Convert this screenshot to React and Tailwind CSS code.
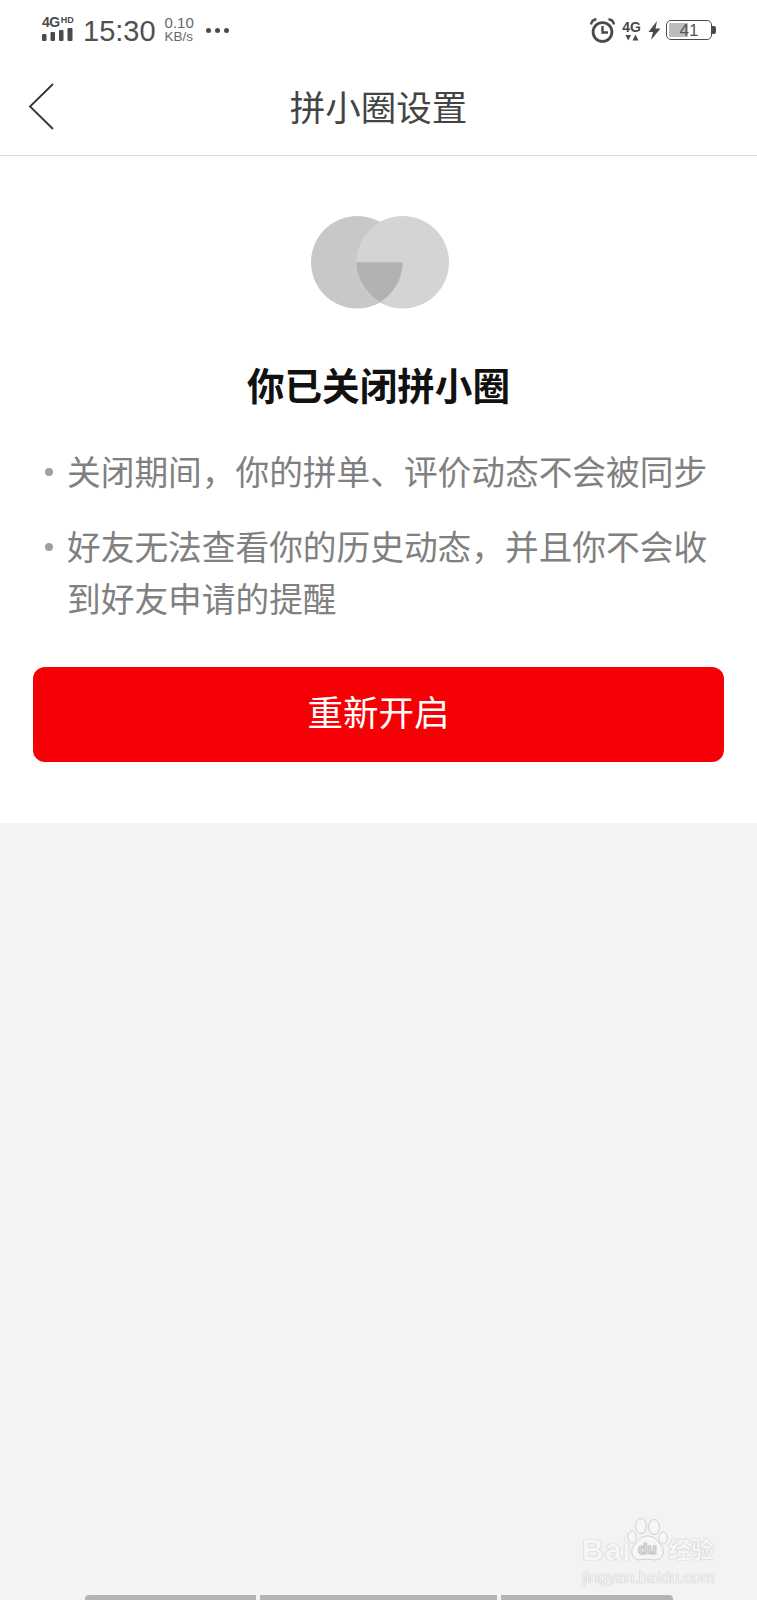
import React from 'react';

const cjk = 'font-["Noto_Sans_CJK_SC",sans-serif]';
const latin = 'font-["Liberation_Sans",Arial,sans-serif]';

const SignalIcon = () => (
    <div className="flex flex-col w-[31px] h-[24px] mt-[-3px] text-[#4a4a4a]">
        <div className={`${latin} font-bold flex items-start h-[10px]`}>
            <span className="text-[14px] leading-[11px] tracking-[-0.5px]">4G</span>
            <span className="text-[9px] leading-[7px] ml-[1px]">HD</span>
        </div>
        <svg width="31" height="14" viewBox="0 0 31 14" fill="#4a4a4a">
            <rect x="0" y="7" width="4.5" height="7" rx="1" />
            <rect x="8.5" y="5" width="4.5" height="9" rx="1" />
            <rect x="17" y="3" width="4.5" height="11" rx="1" />
            <rect x="25.5" y="1" width="5" height="13" rx="1" />
        </svg>
    </div>
);

const AlarmIcon = () => (
    <svg width="25" height="25" viewBox="0 0 25 25" fill="none" stroke="#4a4a4a">
        <circle cx="12.5" cy="14" r="9.4" strokeWidth="2.8" />
        <path d="M12.5 8v6.5h5.5" strokeWidth="2.4" />
        <path d="M1 6.5C1.5 3.5 3.5 1.5 6.5 1.2M24 6.5C23.5 3.5 21.5 1.5 18.5 1.2" strokeWidth="2.4" />
    </svg>
);

const BoltIcon = () => (
    <svg width="13" height="19" viewBox="0 0 13 19" fill="#4a4a4a">
        <path d="M9 0L0.5 11h4.5L3 19 12.5 7.5H7.5L9 0z" />
    </svg>
);

const StatusBar = () => (
    <div className="h-[60px] shrink-0 flex items-center justify-between pl-[42px] pr-[41px] text-[#4a4a4a]">
        <div className="flex items-center">
            <SignalIcon />
            <span className={`${latin} text-[29px] leading-none ml-[10px] mt-[2px] text-[#505050]`}>15:30</span>
            <div className={`${latin} ml-[9px] flex flex-col items-start text-[#666]`}>
                <span className="text-[15px] leading-[14px]">0.10</span>
                <span className="text-[13.5px] leading-[14px]">KB/s</span>
            </div>
            <div className="flex gap-[4px] ml-[12px]">
                <span className="w-[5px] h-[5px] rounded-full bg-[#4a4a4a]" />
                <span className="w-[5px] h-[5px] rounded-full bg-[#4a4a4a]" />
                <span className="w-[5px] h-[5px] rounded-full bg-[#4a4a4a]" />
            </div>
        </div>
        <div className="flex items-center">
            <AlarmIcon />
            <div className="flex flex-col items-center ml-[8px] w-[17px]">
                <span className={`${latin} font-bold text-[14px] leading-[14px]`}>4G</span>
                <svg width="14" height="7" viewBox="0 0 14 7" fill="#4a4a4a">
                    <path d="M0.5 1h5.5L3.2 6.5zM10.5 0.5l3 6h-6z" />
                </svg>
            </div>
            <div className="ml-[8px]">
                <BoltIcon />
            </div>
            <div className="ml-[5px] flex items-center">
                <div className="relative w-[46px] h-[20px] rounded-[5px] border border-[#4a4a4a] p-[2px]">
                    <div className="w-[19px] h-full rounded-[1px] bg-[#bdbdbd]" />
                    <span className={`${latin} absolute inset-0 flex items-center justify-center text-[17px] leading-none text-[#555]`}>41</span>
                </div>
                <div className="w-[4px] h-[8px] rounded-r-[2px] bg-[#4a4a4a]" />
            </div>
        </div>
    </div>
);

const Header = () => (
    <div className="relative h-[96px] shrink-0 flex items-center justify-center border-b border-[#dddddd]">
        <svg className="absolute left-[27px] top-[22px]" width="30" height="50" viewBox="0 0 30 50" fill="none" stroke="#333" strokeWidth="1.8">
            <path d="M26 2L3 24.5 26 47" />
        </svg>
        <h1 className={`${cjk} text-[35.5px] leading-none text-[#444444] pb-[3px]`}>拼小圈设置</h1>
    </div>
);

const CirclesLogo = () => (
    <svg className="ml-[2px]" width="138" height="93" viewBox="0 0 138 93">
        <circle cx="46.3" cy="46.3" r="46.3" fill="#c8c8c8" />
        <circle cx="91.7" cy="46.3" r="46.3" fill="#d4d4d4" />
        <path d="M45.4 46.3h46.2C91.6 63 82 78.5 69 86 56 78.5 45.4 63 45.4 46.3z" fill="#b2b2b2" />
    </svg>
);

const Bullet = ({ children }) => (
    <div className="flex">
        <span className="w-[8px] h-[8px] rounded-full bg-[#a0a0a0] mt-[23px] mr-[14px] shrink-0" />
        <p className="text-[33.7px] leading-[52px] text-[#808080]">{children}</p>
    </div>
);

const Watermark = () => (
    <div className={`${latin} absolute left-[582px] top-[1518px] w-[140px] text-[#f6f6f6] [text-shadow:0_0_1px_#c0c0c0,0_0_1px_#c0c0c0]`}>
        <div className="flex items-end h-[44px]">
            <span className="text-[30px] font-bold leading-[24px] tracking-[1px] w-[45px] whitespace-nowrap">Bai</span>
            <svg className="shrink-0" width="41" height="44" viewBox="0 0 41 44" fill="#f6f6f6" stroke="#d0d0d0" strokeWidth="1">
                <ellipse cx="14" cy="8" rx="5.5" ry="7.5" />
                <ellipse cx="27" cy="9" rx="5.5" ry="7.5" />
                <ellipse cx="5" cy="19" rx="4.2" ry="6" />
                <ellipse cx="36" cy="20" rx="4.2" ry="6" />
                <path d="M20.5 18c7 0 10 5 14 10 4 6 1 14-6 14-3 0-5-1-8-1s-5 1-8 1c-7 0-10-8-6-14 4-5 7-10 14-10z" />
                <text x="20.5" y="36" textAnchor="middle" fontSize="15" fontWeight="700" fill="#f6f6f6" stroke="#c8c8c8" strokeWidth="0.6">du</text>
            </svg>
            <span className={`${cjk} text-[23px] font-bold leading-[28px] whitespace-nowrap`}>经验</span>
        </div>
        <div className="text-[16.5px] leading-[20px] mt-[5px] whitespace-nowrap">jingyan.baidu.com</div>
    </div>
);

const App = () => {
    return (
        <div className={`${cjk} relative w-[757px] h-[1600px] overflow-hidden flex flex-col bg-[#f3f3f3]`}>
            <div className="bg-white shrink-0 h-[823px] flex flex-col">
                <StatusBar />
                <Header />
                <div className="flex justify-center mt-[60px]">
                    <CirclesLogo />
                </div>
                <h2 className="text-[37.6px] font-bold leading-[48px] text-[#111111] text-center mt-[51px]">你已关闭拼小圈</h2>
                <div className="pl-[45px] pr-[30px] mt-[37px] flex flex-col gap-[23px]">
                    <Bullet>关闭期间，你的拼单、评价动态不会被同步</Bullet>
                    <Bullet>好友无法查看你的历史动态，并且你不会收到好友申请的提醒</Bullet>
                </div>
                <button className="mx-[33px] mt-[43px] h-[95px] pb-[7px] rounded-[12px] bg-[#f60005] text-white text-[35.5px] leading-none">
                    重新开启
                </button>
            </div>
            {/* 底部横条 */}
            <div className="mt-auto h-[5px] pl-[85px] flex gap-[4px]">
                <div className="w-[171px] bg-[#b4b4b4] rounded-tl-[4px]" />
                <div className="w-[237px] bg-[#b4b4b4]" />
                <div className="w-[172px] bg-[#b4b4b4] rounded-tr-[4px]" />
            </div>
            <Watermark />
        </div>
    );
};

export default App;
